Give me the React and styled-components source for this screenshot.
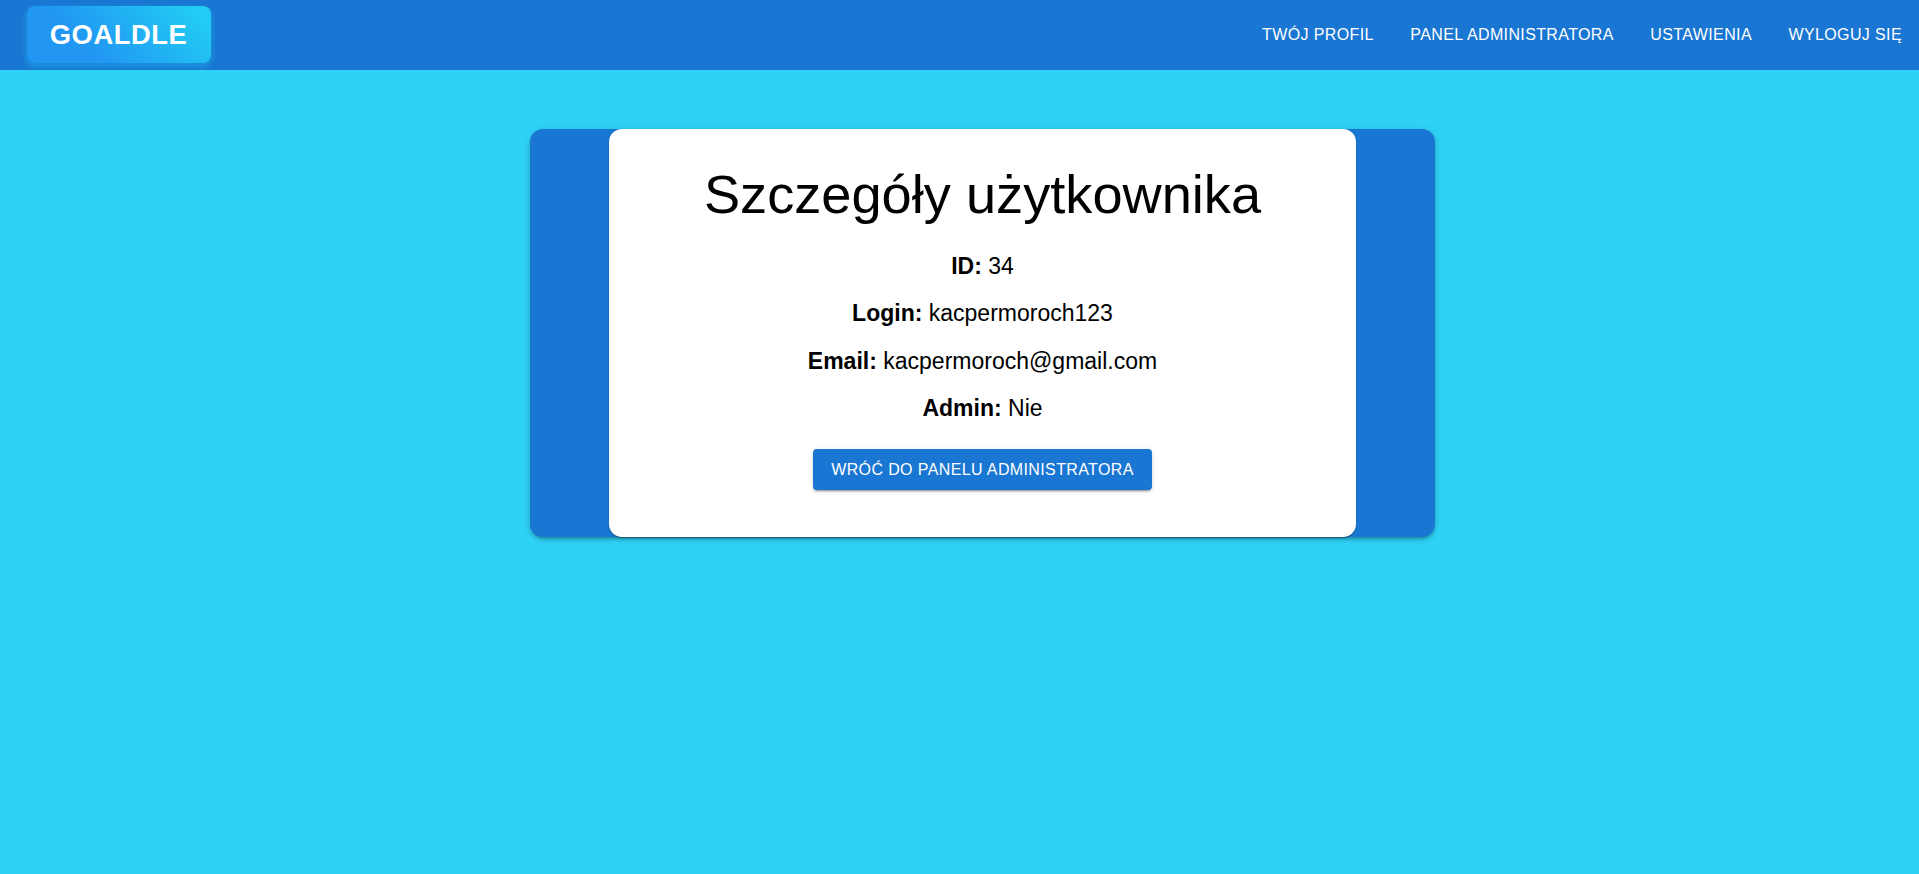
import React from 'react';
import styled, { createGlobalStyle } from 'styled-components';

const GlobalStyle = createGlobalStyle`
  *, *::before, *::after { box-sizing: border-box; }
  body {
    margin: 0;
    min-height: 100vh;
    background: #2fd2f7;
    color: #000;
    font-family: Arial, "Liberation Sans", sans-serif;
  }
`;

const Header = styled.header`
  display: flex;
  align-items: center;
  justify-content: space-between;
  height: 70px;
  padding: 0 9px 0 27px;
  background: #1976d2;
`;

const Logo = styled.a`
  display: flex;
  align-items: center;
  justify-content: center;
  width: 184px;
  height: 57px;
  margin-bottom: 1px;
  padding-right: 1px;
  border-radius: 8px;
  background: linear-gradient(45deg, #2196f3 30%, #21cbf3 90%);
  box-shadow: 0 3px 5px 2px rgba(33, 203, 243, 0.3);
  color: #fff;
  font-size: 27.4px;
  font-weight: 700;
  letter-spacing: 0.5px;
  text-decoration: none;
`;

const Nav = styled.nav`
  display: flex;
  gap: 20.5px;
`;

const NavLink = styled.a`
  padding: 6px 8px;
  color: #fff;
  font-size: 16px;
  line-height: 28px;
  letter-spacing: 0.38px;
  text-transform: uppercase;
  text-decoration: none;
  white-space: nowrap;
`;

const Main = styled.main`
  display: flex;
  justify-content: center;
  padding: 59px 0 0 46px;
`;

const elevation = '0 3px 3px -2px rgba(0, 0, 0, 0.2), 0 3px 4px rgba(0, 0, 0, 0.14), 0 1px 8px rgba(0, 0, 0, 0.12)';

const Panel = styled.section`
  display: flex;
  justify-content: center;
  width: 905px;
  height: 408px;
  border-radius: 13px;
  background: #1976d2;
  box-shadow: ${elevation};
`;

const Card = styled.article`
  display: flex;
  flex-direction: column;
  align-items: center;
  width: 747px;
  padding-top: 33px;
  border-radius: 13px;
  background: #fff;
  box-shadow: 0 2px 1px -1px rgba(0, 0, 0, 0.2), 0 1px 1px rgba(0, 0, 0, 0.14), 0 1px 3px rgba(0, 0, 0, 0.12);
`;

const Title = styled.h1`
  margin: 0 0 22px;
  font-size: 54.2px;
  font-weight: 400;
  line-height: 65px;
`;

const Detail = styled.p`
  margin: 0 0 13.4px;
  font-size: 23px;
  line-height: 34px;
`;

const Button = styled.button`
  width: 339px;
  height: 41px;
  margin-top: 10px;
  padding: 1px 0 0;
  border: 0;
  border-radius: 4px;
  background: #1976d2;
  box-shadow: 0 3px 1px -2px rgba(0, 0, 0, 0.2), 0 2px 2px rgba(0, 0, 0, 0.14), 0 1px 5px rgba(0, 0, 0, 0.12);
  color: #fff;
  font: 16px/28px Arial, "Liberation Sans", sans-serif;
  letter-spacing: 0.38px;
  text-transform: uppercase;
`;

const links = ['Twój profil', 'Panel administratora', 'Ustawienia', 'Wyloguj się'];

const details = [
  ['ID', '34'],
  ['Login', 'kacpermoroch123'],
  ['Email', 'kacpermoroch@gmail.com'],
  ['Admin', 'Nie'],
];

export default function App() {
  return (
    <>
      <GlobalStyle />
      <Header>
        <Logo>GOALDLE</Logo>
        <Nav>
          {links.map((label) => (
            <NavLink key={label}>{label}</NavLink>
          ))}
        </Nav>
      </Header>
      <Main>
        <Panel>
          <Card>
            <Title>Szczegóły użytkownika</Title>
            {details.map(([label, value]) => (
              <Detail key={label}>
                <strong>{label}:</strong> {value}
              </Detail>
            ))}
            <Button type="button">Wróć do panelu administratora</Button>
          </Card>
        </Panel>
      </Main>
    </>
  );
}
